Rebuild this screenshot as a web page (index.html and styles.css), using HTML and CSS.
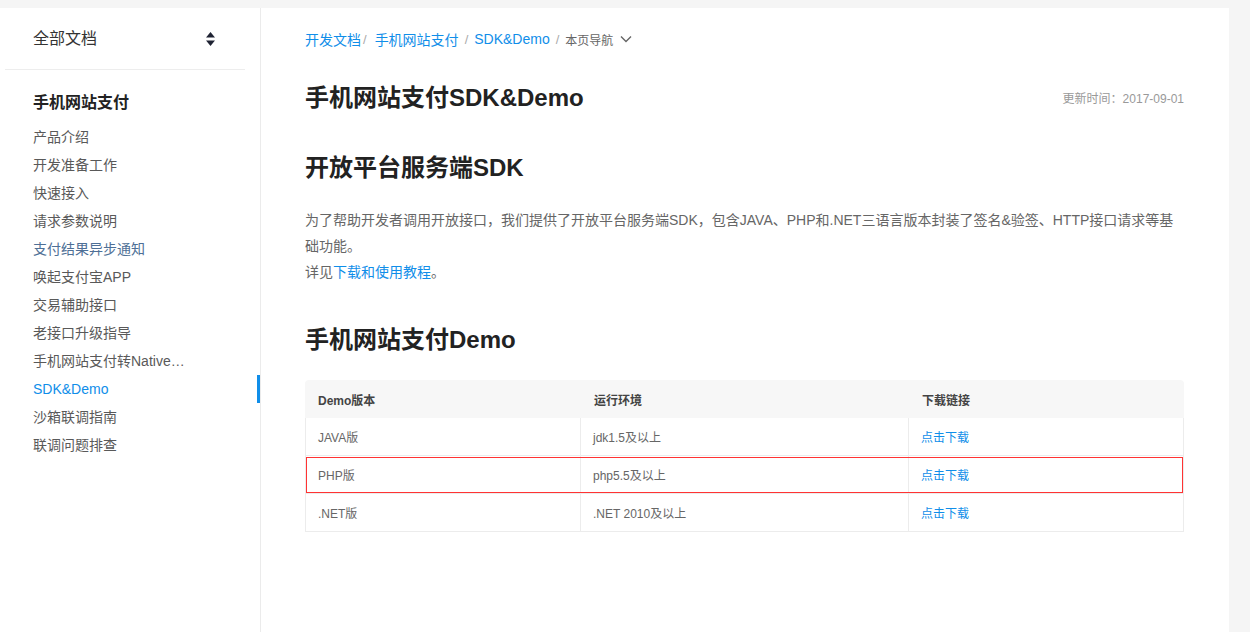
FILE: index.html
```html
<!DOCTYPE html>
<html lang="zh-CN">
<head>
<meta charset="utf-8">
<title>手机网站支付SDK&amp;Demo</title>
<link rel="stylesheet" href="styles.css">
</head>
<body>
<div class="page">
  <aside class="sidebar">
    <div class="side-head">
      <span>全部文档</span>
      <svg class="updown" width="9" height="14" viewBox="0 0 9 14"><path d="M4.5 0 L9 5.5 H0 Z" fill="#1f2333"/><path d="M4.5 14 L9 8.5 H0 Z" fill="#1f2333"/></svg>
    </div>
    <div class="side-title">手机网站支付</div>
    <ul class="side-list">
      <li>产品介绍</li>
      <li>开发准备工作</li>
      <li>快速接入</li>
      <li>请求参数说明</li>
      <li class="visited">支付结果异步通知</li>
      <li>唤起支付宝APP</li>
      <li>交易辅助接口</li>
      <li>老接口升级指导</li>
      <li>手机网站支付转Native支付</li>
      <li class="active">SDK&amp;Demo</li>
      <li>沙箱联调指南</li>
      <li>联调问题排查</li>
    </ul>
  </aside>
  <main class="main">
    <nav class="crumbs">
      <a>开发文档</a><span class="sep first">/</span><a>手机网站支付</a><span class="sep">/</span><a>SDK&amp;Demo</a><span class="sep">/</span><span class="cur">本页导航</span>
      <svg class="chev" width="12" height="8" viewBox="0 0 12 8"><path d="M1 1.5 L6 6.5 L11 1.5" fill="none" stroke="#666" stroke-width="1.4"/></svg>
    </nav>
    <div class="title-row">
      <h1>手机网站支付SDK&amp;Demo</h1>
      <span class="updated">更新时间：2017-09-01</span>
    </div>
    <h2 class="h2-first">开放平台服务端SDK</h2>
    <p class="para">为了帮助开发者调用开放接口，我们提供了开放平台服务端SDK，包含JAVA、PHP和.NET三语言版本封装了签名&amp;验签、HTTP接口请求等基础功能。<br>详见<a>下载和使用教程</a>。</p>
    <h2>手机网站支付Demo</h2>
    <table class="demo">
      <colgroup><col class="c1"><col class="c2"><col class="c3"></colgroup>
      <thead>
        <tr><th>Demo版本</th><th>运行环境</th><th>下载链接</th></tr>
      </thead>
      <tbody>
        <tr><td>JAVA版</td><td>jdk1.5及以上</td><td><a>点击下载</a></td></tr>
        <tr class="hl"><td>PHP版</td><td>php5.5及以上</td><td><a>点击下载</a></td></tr>
        <tr><td>.NET版</td><td>.NET 2010及以上</td><td><a>点击下载</a></td></tr>
      </tbody>
    </table>
  </main>
</div>
</body>
</html>
```
FILE: styles.css
```css
html, body {
  margin: 0;
  padding: 0;
  height: 100%;
}
body {
  background: #f5f5f5;
  font-family: "Liberation Sans", "Noto Sans CJK SC", sans-serif;
  overflow: hidden;
  padding-top: 8px;
  box-sizing: border-box;
}
.page {
  width: 1229px;
  height: calc(100vh - 8px);
  background: #fff;
  display: flex;
}
.sidebar {
  width: 260px;
  flex: none;
  border-right: 1px solid #ebebeb;
}
.side-head {
  height: 61px;
  margin: 0 15px 0 5px;
  padding: 0 30px 0 28px;
  border-bottom: 1px solid #ededed;
  display: flex;
  align-items: center;
  justify-content: space-between;
  font-size: 16px;
  color: #333;
}
.side-head span { line-height: 22px; }
.side-title {
  margin-top: 19px;
  padding-left: 33px;
  font-size: 16px;
  font-weight: bold;
  color: #222;
  line-height: 28px;
}
.side-list {
  list-style: none;
  margin: 6px 0 0;
  padding: 0;
}
.side-list li {
  height: 28px;
  line-height: 28px;
  padding: 0 72px 0 33px;
  font-size: 14px;
  color: #595959;
  white-space: nowrap;
  overflow: hidden;
  text-overflow: ellipsis;
}
.side-list li.visited { color: #4e6f96; }
.side-list li.active {
  color: #108ee9;
  border-right: 3px solid #108ee9;
  padding-right: 69px;
}
.main {
  flex: 1;
  padding: 20px 45px 0 44px;
}
.crumbs {
  display: flex;
  align-items: center;
  height: 22px;
  font-size: 14px;
  color: #108ee9;
}
.crumbs a { color: #108ee9; }
.crumbs .sep {
  color: #aaa;
  margin: 0 6px 0 6px;
  font-size: 13px;
}
.crumbs .sep.first { margin-left: 2px; margin-right: 8px; }
.crumbs .cur {
  color: #666;
  font-size: 12px;
}
.chev { margin-left: 7px; }
.title-row {
  margin-top: 32px;
  display: flex;
  align-items: center;
  justify-content: space-between;
}
h1, h2 {
  margin: 0;
  font-size: 24px;
  font-weight: bold;
  color: #222;
  line-height: 32px;
}
.updated {
  font-size: 12px;
  color: #999;
  margin-top: -2px;
}
h2 { margin-top: 39px; }
.h2-first { margin-top: 38px; }
.para {
  margin: 23px 0 0;
  font-size: 14px;
  line-height: 26px;
  color: #666;
}
.para a { color: #108ee9; }
.demo {
  margin-top: 24px;
  width: 879px;
  border-collapse: separate;
  border-spacing: 0;
  table-layout: fixed;
  font-size: 12px;
}
.c1 { width: 276px; }
.c2 { width: 328px; }
.c3 { width: 275px; }
.demo th {
  background: #f7f7f7;
  height: 38px;
  padding: 0 13px;
  text-align: left;
  font-weight: bold;
  color: #444;
}
.demo th:first-child { border-top-left-radius: 4px; }
.demo th:last-child { border-top-right-radius: 4px; }
.demo td {
  height: 37px;
  padding: 0 12px;
  color: #666;
  border-bottom: 1px solid #ececec;
  border-right: 1px solid #ececec;
}
.demo td:first-child { border-left: 1px solid #ececec; }
.demo td a { color: #108ee9; }
.demo tr.hl {
  outline: 1px solid #ff3333;
  outline-offset: -2px;
}
```
